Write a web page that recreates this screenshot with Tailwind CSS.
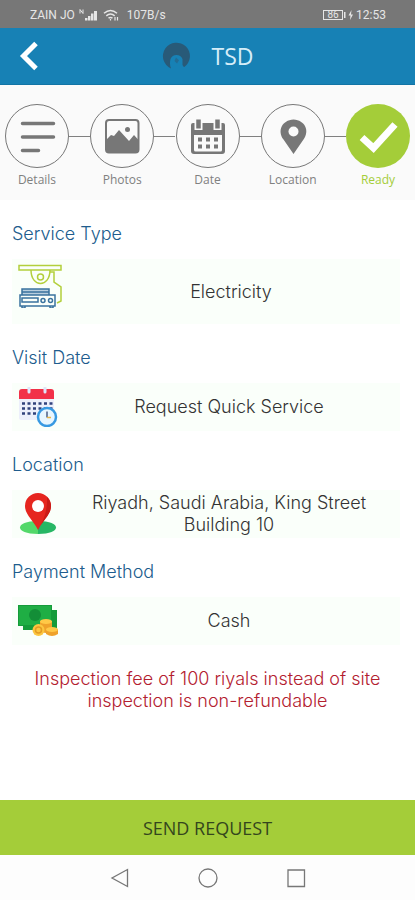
<!DOCTYPE html>
<html lang="en">
<head>
    <meta charset="UTF-8">
    <meta name="viewport" content="width=device-width, initial-scale=1.0">
    <title>TSD</title>
    <script src="https://cdn.jsdelivr.net/npm/@tailwindcss/browser@4"></script>
</head>
<body class="bg-white min-h-screen flex flex-col font-['Open_Sans',sans-serif]">
    <!-- Status bar -->
    <div class="h-7 shrink-0 bg-[#777777] text-[#e6e6e6] font-['Roboto',sans-serif] text-xs flex items-center justify-between pl-[30px] pr-[29px]">
        <div class="flex items-center pt-0.5">
            <span>ZAIN JO</span>
            <svg class="ml-1 w-5 h-3" viewBox="0 0 20 12" fill="currentColor">
                <path d="M1 4.500V.5l3 4v-4" fill="none" stroke="currentColor" stroke-width="1"/>
                <path d="M6 9h2.500v2.500H6zM9 7h2.500v4.500H9zM12 4.500h2.500v7H12zM15 2h3v9.500h-3z"/>
            </svg>
            <svg class="ml-1 w-4 h-3" viewBox="0 0 16 12" fill="none" stroke="currentColor" stroke-width="1.500">
                <path d="M1 4.200q6.500-5.500 13 0M3.300 6.800q4.200-3.500 8.400 0M5.500 9.200q2-1.500 4 0"/>
                <path d="M7.500 11.500v-1.500M12 8v3.500M14.500 8v3.500" stroke-width="1.200"/>
            </svg>
            <span class="ml-2">107B/s</span>
        </div>
        <div class="flex items-center pt-0.5">
            <span class="h-2.5 w-5 border border-current text-[10px] leading-2 text-center">86</span>
            <svg class="ml-px w-2.5 h-2.5" viewBox="0 0 10 10" fill="currentColor">
                <path d="M0 2h1.500v6H0zM7.500 0L4.500 5.500h2L6 10l3-5.500H7z"/>
            </svg>
            <span class="ml-0.5">12:53</span>
        </div>
    </div>

    <!-- App header -->
    <header class="h-[57px] shrink-0 bg-[#1781b5] grid grid-cols-[1fr_auto_1fr] items-center border-b border-[#1274a5]">
        <button type="button" aria-label="Back" class="ml-[18px] w-6 h-8">
            <svg class="w-6 h-8" viewBox="0 0 24 32" fill="none" stroke="#fff" stroke-width="5">
                <path d="M18 3.500L5.500 16 18 28.500"/>
            </svg>
        </button>
        <div class="flex items-center gap-[22px]">
            <svg class="w-7 h-7" viewBox="0 0 28 28">
                <path d="M9 26.500A13.500 13.500 0 1 1 22 25.300L20.500 23V17a6.500 6.500 0 0 0-12 0c-1 4-.5 7 .5 9.500z" fill="#285a78"/>
                <path d="M14 15.500l3 2.800-2 3.200-2.500-2.500z" fill="#236c94"/>
            </svg>
            <h1 class="text-[23px] leading-7 text-[#d5edf8]">TSD</h1>
        </div>
    </header>

    <!-- Steps -->
    <nav class="shrink-0 bg-[#fafafa] px-[5px] pt-[19px] pb-3 text-xs text-[#808080]">
        <ol class="flex justify-between">
            <li class="w-16 flex flex-col items-center gap-1 relative">
                <svg class="w-16 h-16" viewBox="0 0 64 64" fill="none" stroke="#777">
                    <circle cx="32" cy="32" r="31.500"/>
                    <path d="M17.500 19.500h31M17.500 33h31M17.500 46.500h16" stroke-width="3.500" stroke-linecap="round"/>
                </svg>
                <span class="absolute left-full top-8 w-[21px] h-px bg-[#808080]"></span>
                <span>Details</span>
            </li>
            <li class="w-16 flex flex-col items-center gap-1 relative">
                <svg class="w-16 h-16" viewBox="0 0 64 64" fill="none" stroke="#777">
                    <circle cx="32" cy="32" r="31.500"/>
                    <rect x="16" y="16" width="32.500" height="32.500" rx="3" stroke-width="2"/>
                    <path d="M16 36l5-5 3 1 5-6 10 11 5-6 4.500 5v9.500q0 3-3 3h-26q-3 0-3-3z" fill="#777" stroke="none"/>
                    <circle cx="37.500" cy="25.500" r="2.500" fill="#777" stroke="none"/>
                </svg>
                <span class="absolute left-full top-8 w-[21px] h-px bg-[#808080]"></span>
                <span>Photos</span>
            </li>
            <li class="w-16 flex flex-col items-center gap-1 relative">
                <svg class="w-16 h-16" viewBox="0 0 64 64" fill="none" stroke="#777">
                    <circle cx="32" cy="32" r="31.500"/>
                    <path d="M15 21q0-2 2-2h30q2 0 2 2v26q0 3-3 3H18q-3 0-3-3z" fill="#777" stroke="none"/>
                    <path d="M18 31h28v15q0 1.500-1.500 1.500h-25Q18 47.500 18 46z" fill="#fafafa" stroke="none"/>
                    <path d="M22.500 15v11M41.500 15v11" stroke="#fafafa" stroke-width="8"/>
                    <path d="M22.500 15.500v9M41.500 15.500v9" stroke-width="4.500"/>
                    <path d="M22 35.500h4M30 35.500h4M38 35.500h4M22 42.500h4M30 42.500h4M38 42.500h4" stroke-width="4"/>
                </svg>
                <span class="absolute left-full top-8 w-[21px] h-px bg-[#808080]"></span>
                <span>Date</span>
            </li>
            <li class="w-16 flex flex-col items-center gap-1 relative">
                <svg class="w-16 h-16" viewBox="0 0 64 64" fill="none" stroke="#777">
                    <circle cx="32" cy="32" r="31.500"/>
                    <path d="M32.500 50L22.500 35.500C16 27 21 16 32.500 15.500 44 16 49 27 42.500 35.500z" fill="#777" stroke="none"/>
                    <circle cx="32.500" cy="27.500" r="5" fill="#fafafa" stroke="none"/>
                </svg>
                <span class="absolute left-full top-8 w-[21px] h-px bg-[#808080]"></span>
                <span>Location</span>
            </li>
            <li class="w-16 flex flex-col items-center gap-1 text-[#a4cd39]">
                <svg class="w-16 h-16" viewBox="0 0 64 64" fill="none">
                    <circle cx="32" cy="32" r="32" fill="#a4cd39"/>
                    <path d="M16 33.500L27.500 44 49 20.500" stroke="#fff" stroke-width="7"/>
                </svg>
                <span>Ready</span>
            </li>
        </ol>
    </nav>

    <!-- Summary -->
    <main class="flex-1 px-3 pt-[23px] pb-6 flex flex-col gap-[23px] font-['Inter',sans-serif] text-lg leading-[22px] font-light text-[#333333]">
        <section>
            <h2 class="mb-3.5 text-[#205c8d]">Service Type</h2>
            <div class="min-h-[65px] bg-[#fafffa] mr-[3px] pl-1.5 flex items-center">
                <svg class="w-11 h-11 -mt-3 shrink-0" viewBox="0 0 44 44" fill="none" stroke-width="1.500">
                    <g stroke="#b3cf3c">
                        <path d="M1 1.500h42v4.500H1zM13 6c0 18 19 18 19 0M32 8h4v10l7 5v14l-4 2"/>
                        <circle cx="22.500" cy="13" r="3"/>
                    </g>
                    <g stroke="#3a739f">
                        <path d="M4 31v-6h27v6M4 28h27" fill="#b9cfdf"/>
                        <path d="M2 31h35v11H2zM4 34h16v4H4z"/>
                        <circle cx="25" cy="36.500" r="2"/>
                        <circle cx="32.500" cy="36.500" r="2"/>
                        <path d="M4 42v2h3v-2M32 42v2h3v-2"/>
                    </g>
                </svg>
                <p class="flex-1 text-center">Electricity</p>
            </div>
        </section>
        <section>
            <h2 class="mb-3.5 text-[#205c8d]">Visit Date</h2>
            <div class="min-h-12 bg-[#fafffa] mr-[3px] pl-1.5 flex items-center">
                <svg class="w-10 h-10 shrink-0" viewBox="0 0 40 40">
                    <path d="M1 8h35v23q0 2-2 2H3q-2 0-2-2z" fill="#eceffb"/>
                    <path d="M1 12V5q0-3 3-3h29q3 0 3 3v7z" fill="#f23149"/>
                    <path d="M11 0v5M27 0v5" stroke="#dfe5fa" stroke-width="3" stroke-linecap="round"/>
                    <path d="M4 16.500h31M4 21.500h31M4 26.500h16" stroke="#30427c" stroke-width="2.500" stroke-dasharray="3 2.500"/>
                    <circle cx="29" cy="30" r="9" fill="#e7f6ff" stroke="#3799e2" stroke-width="2.500"/>
                    <path d="M29 24.500v6" stroke="#4a5d85" stroke-width="1.500"/>
                    <path d="M29 30.500h4" stroke="#e9b64a" stroke-width="1.500"/>
                </svg>
                <p class="flex-1 text-center">Request Quick Service</p>
            </div>
        </section>
        <section>
            <h2 class="mb-3.5 text-[#205c8d]">Location</h2>
            <div class="min-h-12 bg-[#fafffa] mr-[3px] pl-1.5 flex items-center">
                <svg class="w-10 h-11 shrink-0" viewBox="0 0 40 44">
                    <path d="M20 29C-4 29-4 42 20 42z" fill="#53d86a"/>
                    <path d="M20 29c24 0 24 13 0 13z" fill="#27b765"/>
                    <path d="M20 38C16 29 7 23 7 14a13 13 0 0 1 26 0c0 9-9 15-13 24z" fill="#e6261f"/>
                    <path d="M20 38C24 29 33 23 33 14q0-5-4-9 1 17-9 33z" fill="#c91b17"/>
                    <circle cx="20" cy="14" r="6" fill="#fff"/>
                </svg>
                <p class="flex-1 text-center">Riyadh, Saudi Arabia, King Street<br>Building 10</p>
            </div>
        </section>
        <section>
            <h2 class="mb-3.5 text-[#205c8d]">Payment Method</h2>
            <div class="min-h-12 bg-[#fafffa] mr-[3px] pl-1.5 flex items-center">
                <svg class="w-10 h-10 shrink-0" viewBox="0 0 40 40">
                    <path d="M5 9h34v20H5z" fill="#159b3a"/>
                    <path d="M0 4h34v21H0z" fill="#1fae44"/>
                    <circle cx="17" cy="14" r="6" fill="#138e37"/>
                    <path d="M.5 4.500h33v20H.5z" fill="none" stroke="#159b3a"/>
                    <g fill="#efa22b">
                        <path d="M22 20v10q6 4 12 0V20z"/>
                        <path d="M28 28v5q6 4 12 0v-5z"/>
                    </g>
                    <ellipse cx="28" cy="20.500" rx="6" ry="2.500" fill="#ffc947"/>
                    <ellipse cx="34" cy="28.500" rx="6" ry="2.500" fill="#ffc947"/>
                    <circle cx="20.500" cy="29" r="6" fill="#fcc63f"/>
                    <circle cx="20.500" cy="29" r="3" fill="none" stroke="#e49b24" stroke-width="1.500"/>
                </svg>
                <p class="flex-1 text-center">Cash</p>
            </div>
        </section>
        <p class="text-center text-[#b3202f]">Inspection fee of 100 riyals instead of site<br>inspection is non-refundable</p>
    </main>

    <button type="button" class="h-[55px] shrink-0 w-full bg-[#a4cd39] text-lg text-[#34461d]">SEND REQUEST</button>

    <!-- System navigation -->
    <div class="h-[45px] shrink-0 bg-[#fdfdfd] flex items-center justify-center gap-16">
        <button type="button" aria-label="Back" class="w-6 h-6">
            <svg viewBox="0 0 24 24" fill="none" stroke="#777" stroke-width="1.300"><path d="M19.500 3.500v17L4 12z"/></svg>
        </button>
        <button type="button" aria-label="Home" class="w-6 h-6">
            <svg viewBox="0 0 24 24" fill="none" stroke="#777" stroke-width="1.300"><circle cx="12" cy="12" r="9"/></svg>
        </button>
        <button type="button" aria-label="Recent apps" class="w-6 h-6">
            <svg viewBox="0 0 24 24" fill="none" stroke="#777" stroke-width="1.300"><path d="M4 4h16.500v16.500H4z"/></svg>
        </button>
    </div>
</body>
</html>
